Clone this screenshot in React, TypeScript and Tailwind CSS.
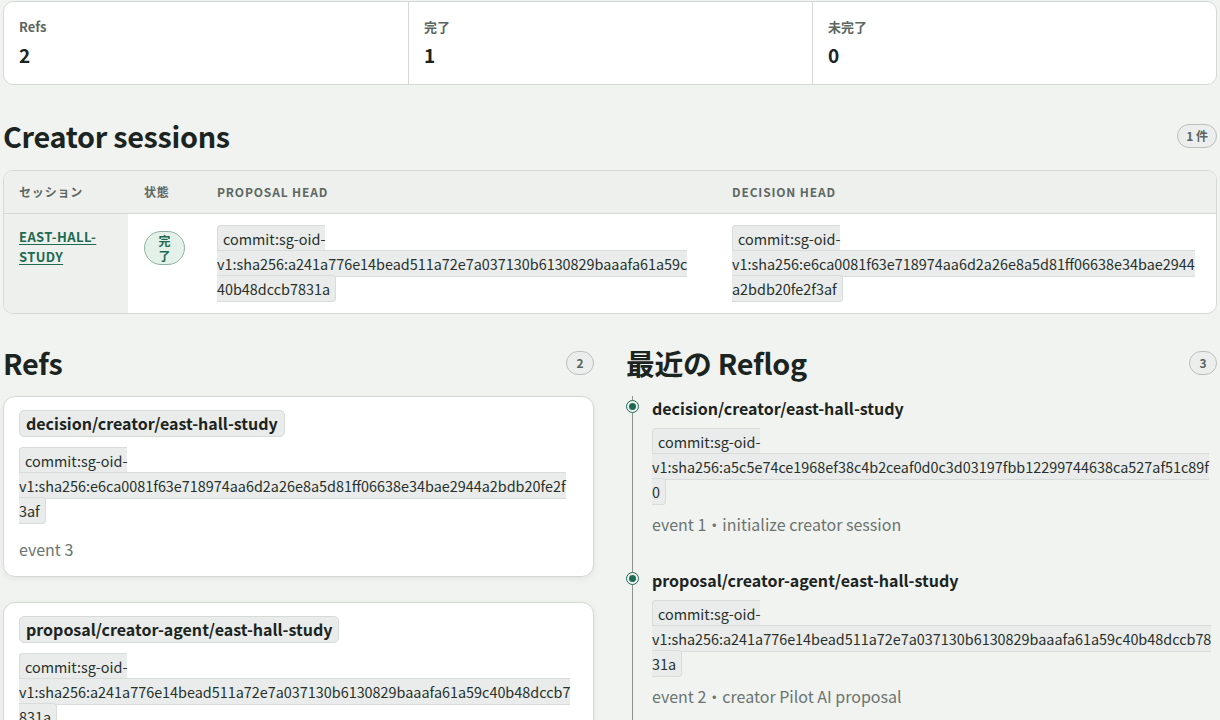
import React from 'react';

const FONT = "font-['Noto_Sans_CJK_JP','Noto_Sans',sans-serif]";

interface RefItem {
  name: string;
  commit: string;
  meta: string;
}

const stats = [
  { label: 'Refs', value: '2' },
  { label: '完了', value: '1' },
  { label: '未完了', value: '0' },
];

const refs: RefItem[] = [
  {
    name: 'decision/creator/east-hall-study',
    commit: 'commit:sg-oid-v1:sha256:e6ca0081f63e718974aa6d2a26e8a5d81ff06638e34bae2944a2bdb20fe2f3af',
    meta: 'event 3',
  },
  {
    name: 'proposal/creator-agent/east-hall-study',
    commit: 'commit:sg-oid-v1:sha256:a241a776e14bead511a72e7a037130b6130829baaafa61a59c40b48dccb7831a',
    meta: 'event 2',
  },
];

const reflog: RefItem[] = [
  {
    name: 'decision/creator/east-hall-study',
    commit: 'commit:sg-oid-v1:sha256:a5c5e74ce1968ef38c4b2ceaf0d0c3d03197fbb12299744638ca527af51c89f0',
    meta: 'event 1・initialize creator session',
  },
  {
    name: 'proposal/creator-agent/east-hall-study',
    commit: 'commit:sg-oid-v1:sha256:a241a776e14bead511a72e7a037130b6130829baaafa61a59c40b48dccb7831a',
    meta: 'event 2・creator Pilot AI proposal',
  },
  {
    name: 'decision/creator/east-hall-study',
    commit: 'commit:sg-oid-v1:sha256:e6ca0081f63e718974aa6d2a26e8a5d81ff06638e34bae2944a2bdb20fe2f3af',
    meta: 'event 3・creator decision',
  },
];

function Commit({ value }: { value: string }) {
  return (
    <code
      className={`${FONT} text-[14.4px] leading-[25px] bg-[#e9ecea] border border-[#d9ddda] rounded-[4px] px-[5px] py-[2px] text-[#27302c] [overflow-wrap:anywhere]`}
    >
      {value}
    </code>
  );
}

function CountBadge({ children }: { children: React.ReactNode }) {
  return (
    <span className="inline-flex items-center justify-center h-[24px] min-w-[28px] px-[8px] rounded-full border border-[#b9c0bc] bg-[#eceeed] text-[12px] font-bold text-[#5a6560]">
      {children}
    </span>
  );
}

function SectionHeading({ title, count }: { title: string; count: string }) {
  return (
    <div className="flex items-center justify-between h-[36px]">
      <h2 className="text-[28.8px] leading-[36px] font-bold text-[#1b2420] tracking-[-0.3px]">{title}</h2>
      <CountBadge>{count}</CountBadge>
    </div>
  );
}

function RefCard({ item }: { item: RefItem }) {
  return (
    <div className="bg-white border border-[#d5d9d6] rounded-[12px] shadow-[0_2px_6px_rgba(0,0,0,0.06)] pt-[13px] pb-[15px] pl-[15px] pr-[21px]">
      <span className="inline-block text-[16px] leading-[25px] font-bold text-[#1b2420] bg-[#e9ecea] border border-[#d6dbd8] rounded-[5px] px-[6px]">
        {item.name}
      </span>
      <div className="mt-[11px] leading-[25px]">
        <Commit value={item.commit} />
      </div>
      <p className="mt-[14px] text-[16px] leading-[24px] text-[#6b7470]">{item.meta}</p>
    </div>
  );
}

export default function App() {
  return (
    <div className={`${FONT} min-h-screen bg-[#f1f3f1] px-[3px] pt-[1px] pb-10 text-[#1b2420]`}>
      <div className="grid grid-cols-3 bg-white border border-[#d5d9d6] rounded-[10px] h-[84px]">
        {stats.map((s, i) => (
          <div key={s.label} className={`px-[15px] pt-[16px] ${i > 0 ? 'border-l border-[#d5d9d6]' : ''}`}>
            <div className="text-[13px] leading-[18px] font-semibold text-[#5d6662]">{s.label}</div>
            <div className="mt-[7px] text-[19px] leading-[24px] font-bold text-[#1b2420]">{s.value}</div>
          </div>
        ))}
      </div>

      <div className="mt-[33px]">
        <SectionHeading title="Creator sessions" count="1 件" />
      </div>

      <div className="mt-[16px] border border-[#d5d9d6] rounded-[10px] overflow-hidden bg-white">
        <div className="grid grid-cols-[124px_73px_515px_1fr] h-[43px] items-center bg-[#eef0ee] border-b border-[#d5d9d6] text-[12px] font-bold tracking-[0.07em] text-[#5d6863]">
          <div className="pl-[15px]">セッション</div>
          <div className="pl-[16px]">状態</div>
          <div className="pl-[16px]">PROPOSAL HEAD</div>
          <div className="pl-[16px]">DECISION HEAD</div>
        </div>
        <div className="grid grid-cols-[124px_73px_515px_1fr] h-[99px]">
          <div className="bg-[#eef0ee] pl-[15px] pr-4 pt-[13px] text-[13px] leading-[20px]">
            <a href="#" className="font-bold tracking-[0.03em] text-[#1d6b50] underline underline-offset-2 uppercase">
              east-hall-study
            </a>
          </div>
          <div className="pl-[16px] pt-[17px]">
            <span className="inline-block w-[41px] rounded-full border border-[#8fb3a2] bg-[#e3f1e9] text-center text-[12px] leading-[15px] font-bold text-[#1d6b50] py-[1px]">
              完<br />了
            </span>
          </div>
          <div className="pl-[16px] pr-[24px] pt-[12px] leading-[25px]">
            <Commit value="commit:sg-oid-v1:sha256:a241a776e14bead511a72e7a037130b6130829baaafa61a59c40b48dccb7831a" />
          </div>
          <div className="px-[16px] pt-[12px] leading-[25px]">
            <Commit value="commit:sg-oid-v1:sha256:e6ca0081f63e718974aa6d2a26e8a5d81ff06638e34bae2944a2bdb20fe2f3af" />
          </div>
        </div>
      </div>

      <div className="mt-[31px] grid grid-cols-[591px_1fr] gap-[32px]">
        <section>
          <SectionHeading title="Refs" count="2" />
          <div className="mt-[15px] flex flex-col gap-[25px]">
            {refs.map((r) => (
              <RefCard key={r.name} item={r} />
            ))}
          </div>
        </section>

        <section>
          <SectionHeading title="最近の Reflog" count="3" />
          <ol className="mt-[15px] ml-[6px] border-l border-[#8b9590] flex flex-col gap-[32px]">
            {reflog.map((r, i) => (
              <li key={i} className="relative pl-[19px]">
                <span className="absolute left-[-7px] top-[4px] w-[13px] h-[13px] rounded-full border border-[#1d6b55] bg-[#f1f3f1] flex items-center justify-center">
                  <span className="w-[7px] h-[7px] rounded-full bg-[#1d6b55]" />
                </span>
                <div className="text-[16px] leading-[24px] font-bold text-[#1b2420]">{r.name}</div>
                <div className="mt-[9px] leading-[25px]">
                  <Commit value={r.commit} />
                </div>
                <p className="mt-[8px] text-[16px] leading-[24px] text-[#6b7470]">{r.meta}</p>
              </li>
            ))}
          </ol>
        </section>
      </div>
    </div>
  );
}
